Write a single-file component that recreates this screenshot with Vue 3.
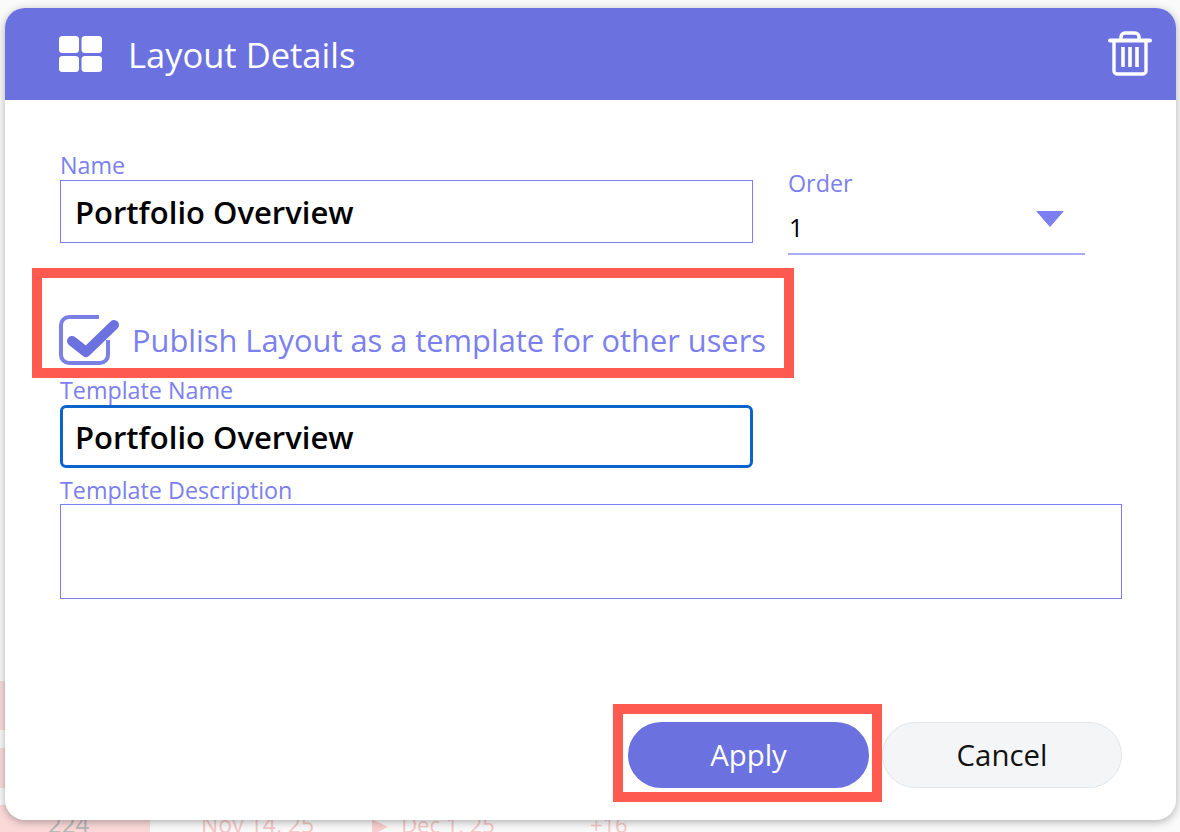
<template>
  <div class="page">
    <!-- faded table behind the dialog -->
    <div class="backdrop">
      <div v-for="b in leftBands" :key="b.top" class="band" :style="{ top: b.top + 'px', height: b.height + 'px' }"></div>
      <div class="last-row">
        <span class="cell-num">224</span>
        <span class="cell-date">Nov 14, 25</span>
        <span class="cell-tri"></span>
        <span class="cell-date2">Dec 1, 25</span>
        <span class="cell-plus">+16</span>
      </div>
    </div>

    <div class="dialog">
      <header class="head">
        <svg class="grid-icon" width="43" height="36" viewBox="0 0 43 36">
          <rect x="0" y="0" width="20" height="17" rx="3.5" fill="#fff" />
          <rect x="22.5" y="0" width="20.5" height="17" rx="3.5" fill="#fff" />
          <rect x="0" y="20" width="20" height="16" rx="3.5" fill="#fff" />
          <rect x="22.5" y="20" width="20.5" height="16" rx="3.5" fill="#fff" />
        </svg>
        <h1 class="title">Layout Details</h1>
        <svg class="trash" width="44" height="46" viewBox="0 0 44 46" fill="none" stroke="#fff">
          <path d="M2 10.5H42" stroke-width="4" stroke-linecap="round" />
          <path d="M13 9V7a4 4 0 0 1 4-4h10a4 4 0 0 1 4 4v2" stroke-width="3.4" />
          <path d="M6 11V41a3 3 0 0 0 3 3H35a3 3 0 0 0 3-3V11" stroke-width="3.4" />
          <path d="M15 17V37M22 17V37M29 17V37" stroke-width="3.6" />
        </svg>
      </header>

      <div class="body">
        <div class="top-row">
          <div class="name-field">
            <label class="lbl">Name</label>
            <div class="box">Portfolio Overview</div>
          </div>
          <div class="order-field">
            <label class="lbl">Order</label>
            <div class="select">
              <span>1</span>
              <svg width="28" height="18" viewBox="0 0 28 18"><path d="M1 1.5H27L14 16.5Z" fill="#7b7ff0" stroke="#7b7ff0" stroke-linejoin="round" /></svg>
            </div>
          </div>
        </div>

        <div class="publish">
          <svg width="62" height="50" viewBox="0 0 62 50" fill="none">
            <path d="M49 25V40a8 8 0 0 1-8 8H10a8 8 0 0 1-8-8V10a8 8 0 0 1 8-8H40" stroke="#7a80e6" stroke-width="4" />
            <path d="M13 26L27 37L55 10" stroke="#6b72df" stroke-width="10" stroke-linecap="round" stroke-linejoin="round" />
          </svg>
          <span>Publish Layout as a template for other users</span>
          <i class="mark mark-publish"></i>
        </div>

        <label class="lbl lbl-tpl">Template Name</label>
        <div class="box box-focus">Portfolio Overview</div>

        <label class="lbl lbl-desc">Template Description</label>
        <div class="area"></div>

        <div class="actions">
          <button class="btn apply">Apply<i class="mark mark-apply"></i></button>
          <button class="btn cancel">Cancel</button>
        </div>
      </div>
    </div>
  </div>
</template>

<script setup>
const leftBands = [
  { top: 681, height: 49 },
  { top: 748, height: 40 },
]
</script>

<style>
html,
body {
  margin: 0;
  background: #fff;
}
</style>

<style scoped>
.page {
  position: relative;
  width: 1180px;
  height: 832px;
  overflow: hidden;
  padding: 8px 4px 0 5px;
  box-sizing: border-box;
  font-family: "Open Sans", "Noto Sans", sans-serif;
}

.backdrop {
  position: absolute;
  inset: 0;
  background: #fafafa;
}

.band {
  position: absolute;
  left: 0;
  width: 30px;
  background: #f9dcdc;
}

.last-row {
  position: absolute;
  left: 0;
  right: 0;
  top: 805px;
  height: 27px;
  overflow: hidden;
  display: flex;
  align-items: flex-start;
  font-size: 23px;
  line-height: 38px;
  color: #f5c6c6;
}

.cell-num {
  width: 150px;
  height: 27px;
  box-sizing: border-box;
  padding-left: 48px;
  background: #fbd9d9;
  color: #b5b5b5;
  font-size: 24px;
}

.cell-date {
  margin-left: 51px;
}

.cell-tri {
  margin: 14px 0 0 58px;
  border-left: 16px solid #f9cfcf;
  border-top: 8px solid transparent;
  border-bottom: 8px solid transparent;
}

.cell-date2 {
  margin-left: 13px;
  font-size: 22px;
}

.cell-plus {
  margin-left: 95px;
  font-size: 22px;
}

.dialog {
  position: relative;
  height: 812px;
  background: #fff;
  border-radius: 20px;
  overflow: hidden;
  box-shadow: 0 2px 8px rgba(0, 0, 0, 0.3);
}

.head {
  height: 92px;
  background: #6b72df;
  display: flex;
  align-items: center;
  padding: 0 24px 0 54px;
}

.grid-icon {
  margin-top: -1px;
}

.title {
  margin: 0 0 0 26px;
  flex: 1;
  font-size: 34.5px;
  font-weight: 400;
  color: #fff;
}

.trash {
  margin-top: -3px;
}

.body {
  position: relative;
  padding: 50px 54px 0 55px;
}

.top-row {
  display: flex;
  gap: 35px;
}

.name-field {
  width: 693px;
}

.lbl {
  display: block;
  font-size: 23.3px;
  line-height: 30px;
  color: #7b7ff0;
}

.box {
  width: 693px;
  height: 63px;
  box-sizing: border-box;
  border: 1px solid #7b7ff0;
  padding-left: 14px;
  display: flex;
  align-items: center;
  font-size: 31px;
  font-weight: 600;
  color: #000;
}

.order-field {
  width: 297px;
  padding-top: 18px;
}

.select {
  height: 53px;
  padding: 2px 21px 0 1px;
  border-bottom: 2px solid #a9adf6;
  display: flex;
  align-items: center;
  justify-content: space-between;
  font-size: 25px;
  color: #000;
}

.select svg {
  margin-top: -15px;
}

.publish {
  position: relative;
  display: flex;
  align-items: center;
  gap: 11px;
  height: 50px;
  margin: 60px 0 0 -1px;
  font-size: 30.8px;
  color: #7b7ff0;
}

.lbl-tpl {
  margin-top: 10px;
}

.box-focus {
  border: 3px solid #0b63ce;
  border-radius: 6px;
  padding-left: 12px;
}

.lbl-desc {
  margin-top: 8px;
  line-height: 28px;
}

.area {
  width: 1062px;
  height: 95px;
  box-sizing: border-box;
  border: 1px solid #7b7ff0;
}

.actions {
  display: flex;
  gap: 13px;
  margin: 123px 0 0 568px;
}

.btn {
  position: relative;
  height: 66px;
  border-radius: 33px;
  font-family: inherit;
  font-size: 29.4px;
  padding: 0;
}

.apply {
  width: 242px;
  border: none;
  background: #6b72df;
  color: #fff;
}

.cancel {
  width: 241px;
  border: 1px solid #e4e5e8;
  background: #f4f5f7;
  color: #111;
}

.mark {
  position: absolute;
  border: 10px solid #ff5a4f;
  box-sizing: border-box;
  pointer-events: none;
}

.mark-publish {
  left: -27px;
  top: -47px;
  width: 762px;
  height: 110px;
}

.mark-apply {
  left: -15px;
  top: -18px;
  width: 269px;
  height: 98px;
}
</style>
